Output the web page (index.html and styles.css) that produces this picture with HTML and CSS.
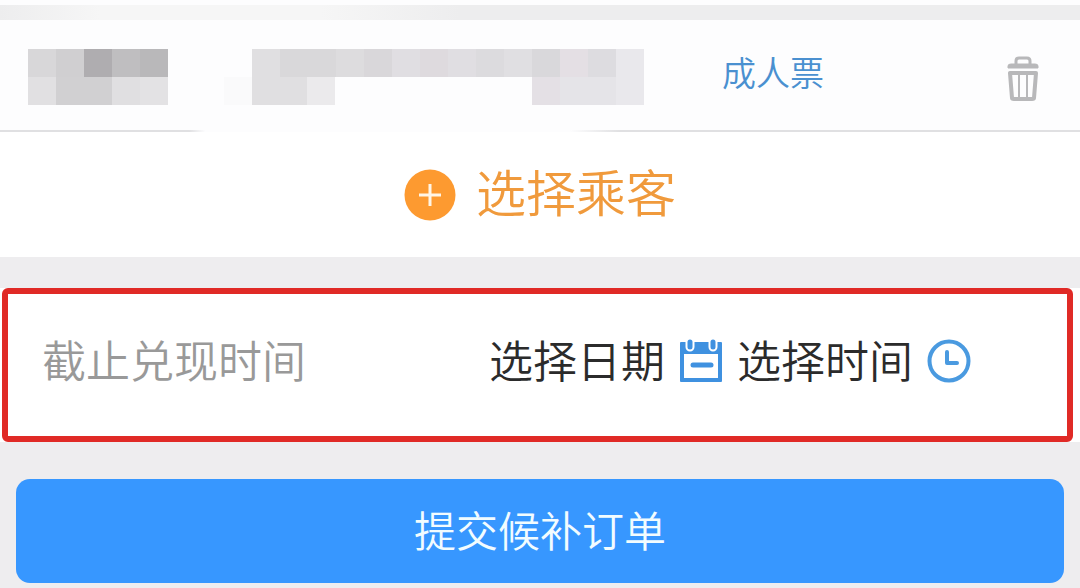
FILE: index.html
```
<!DOCTYPE html>
<html lang="zh-CN">
<head>
    <meta charset="UTF-8">
    <meta name="viewport" content="width=device-width, initial-scale=1.0">
    <title>提交候补订单</title>
    <link rel="stylesheet" href="styles.css">
</head>
<body>
    <div class="strip"></div>

    <div class="passenger">
        <!-- masked name and ID number -->
        <svg class="mask-name" width="140" height="56" viewBox="0 0 140 56" shape-rendering="crispEdges" aria-hidden="true">
            <rect width="28" height="28" fill="#d8d7d9"/>
            <rect x="28" width="28" height="28" fill="#d0cfd1"/>
            <rect x="56" width="28" height="28" fill="#afadb0"/>
            <rect x="84" width="28" height="28" fill="#bfbec0"/>
            <rect x="112" width="28" height="28" fill="#b9b8ba"/>
            <rect y="28" width="28" height="28" fill="#e1e0e2"/>
            <rect x="28" y="28" width="56" height="28" fill="#d1d0d2"/>
            <rect x="84" y="28" width="28" height="28" fill="#e0dfe1"/>
            <rect x="112" y="28" width="28" height="28" fill="#e3e2e4"/>
        </svg>
        <svg class="mask-id" width="420" height="56" viewBox="0 0 420 56" shape-rendering="crispEdges" aria-hidden="true">
            <rect y="28" width="28" height="28" fill="#fafafb"/>
            <rect x="28" width="28" height="28" fill="#e0dfe1"/>
            <rect x="56" width="56" height="28" fill="#d9d8da"/>
            <rect x="112" width="28" height="28" fill="#dddcde"/>
            <rect x="140" width="28" height="28" fill="#d9d7da"/>
            <rect x="168" width="28" height="28" fill="#e0dee2"/>
            <rect x="196" width="28" height="28" fill="#dedade"/>
            <rect x="224" width="28" height="28" fill="#e0dee2"/>
            <rect x="252" width="28" height="28" fill="#dcdbde"/>
            <rect x="280" width="28" height="28" fill="#e0dfe2"/>
            <rect x="308" width="28" height="28" fill="#d9d8db"/>
            <rect x="336" width="28" height="28" fill="#e4dfe4"/>
            <rect x="364" width="28" height="28" fill="#dddce0"/>
            <rect x="392" width="28" height="28" fill="#e9e8ec"/>
            <rect x="28" y="28" width="55" height="28" fill="#e0dfe1"/>
            <rect x="83" y="28" width="28" height="28" fill="#ebeaec"/>
            <rect x="308" y="28" width="28" height="28" fill="#e4e0e5"/>
            <rect x="336" y="28" width="56" height="28" fill="#e5e4e8"/>
            <rect x="392" y="28" width="28" height="28" fill="#e9e8ec"/>
        </svg>
        <span class="ticket-type">成人票</span>
        <button class="delete-btn" type="button" aria-label="删除">
            <svg width="34" height="46" viewBox="0 0 34 46" fill="none" stroke="#b8b8ba">
                <path d="M10 8V5Q10 2 13 2H21Q24 2 24 5V8" stroke-width="3"/>
                <path d="M2 12V10Q2 8 5 8H29Q32 8 32 10V12Z" fill="#b8b8ba" stroke-width="1"/>
                <path d="M4 17H30L28 42Q28 43 26 43H8Q6 43 6 42Z" stroke-width="4" stroke-linejoin="round"/>
                <path d="M13 18V42M21 18V42" stroke-width="2"/>
            </svg>
        </button>
    </div>

    <button class="add-passenger" type="button">
        <svg width="52" height="52" viewBox="0 0 52 52" aria-hidden="true">
            <circle cx="26" cy="26" r="25.5" fill="#fd9a30"/>
            <path d="M15 26H37M26 15V37" stroke="#fff5e6" stroke-width="3"/>
        </svg>
        <span class="add-text">选择乘客</span>
    </button>

    <div class="deadline">
        <div class="deadline-frame">
            <span class="deadline-label">截止兑现时间</span>
            <div class="pickers">
                <button class="picker" type="button">
                    <span class="picker-text">选择日期</span>
                    <svg width="44" height="44" viewBox="0 0 44 44" aria-hidden="true">
                        <path d="M2 3H42Q43 3 43 4V42Q43 43 42 43H2Q1 43 1 42V4Q1 3 2 3Z" fill="#3f91e0"/>
                        <path d="M5 15H39V39H5Z" fill="#fff"/>
                        <path d="M11 3V8M34 3V8" stroke="#fff" stroke-width="9" stroke-linecap="round"/>
                        <path d="M7 0H15V4H7ZM30 0H38V4H30Z" fill="#fff"/>
                        <path d="M11 3V8M34 3V8" stroke="#3f91e0" stroke-width="5" stroke-linecap="round"/>
                        <path d="M14 26H32" stroke="#3f91e0" stroke-width="5" stroke-linecap="round"/>
                    </svg>
                </button>
                <button class="picker" type="button">
                    <span class="picker-text">选择时间</span>
                    <svg width="44" height="44" viewBox="0 0 44 44" fill="none" stroke="#4a9ae0" aria-hidden="true">
                        <circle cx="22" cy="22" r="19.5" stroke-width="4"/>
                        <path d="M20 13V24H30" stroke-width="4" stroke-linecap="round" stroke-linejoin="round"/>
                    </svg>
                </button>
            </div>
        </div>
    </div>

    <div class="submit-area">
        <button class="submit-btn" type="submit">提交候补订单</button>
    </div>
</body>
</html>
```
FILE: styles.css
```
* {
    box-sizing: border-box;
}

body {
    margin: 0;
    background: #eeedef;
    font-family: "Noto Sans CJK SC", sans-serif;
    font-weight: 350;
    color: #2b2b2b;
}

button {
    margin: 0;
    padding: 0;
    border: none;
    background: none;
    font: inherit;
    color: inherit;
    cursor: pointer;
}

svg {
    display: block;
    flex: none;
}

.strip {
    height: 20px;
    border-top: 5px solid #fdfdfe;
    background: linear-gradient(to right, #ededee 0, #f6f6f6 100px, #f6f6f6 320px, #ededee 460px);
}

.passenger {
    display: flex;
    align-items: center;
    height: 112px;
    padding: 4px 40px 0 28px;
    background: #fdfdfe;
    border-bottom: 2px solid;
    border-image: linear-gradient(to right, #e0e0e2 190px, #fdfdfe 206px, #fdfdfe 570px, #e0e0e2 620px) 1;
}

.mask-id {
    margin-left: 56px;
}

.ticket-type {
    margin: 0 auto 0 78px;
    padding-bottom: 10px;
    font-size: 34px;
    line-height: 40px;
    color: #4a90d0;
}

.delete-btn {
    padding-top: 4px;
}

.add-passenger {
    display: flex;
    align-items: center;
    justify-content: center;
    gap: 20px;
    width: 100%;
    height: 125px;
    background: #fff;
    font-size: 50px;
    line-height: 60px;
    color: #f09a3c;
}

.add-text {
    padding-bottom: 10px;
}

.deadline {
    margin-top: 31px;
    padding: 0 7px 0 2px;
    background: #fff;
}

.deadline-frame {
    display: flex;
    align-items: center;
    justify-content: space-between;
    height: 154px;
    padding: 0 96px 8px 34px;
    border: 6px solid #e02a26;
    border-radius: 6px;
    font-size: 44px;
    line-height: 52px;
}

.deadline-label {
    padding-bottom: 4px;
    color: #999;
}

.pickers,
.picker {
    display: flex;
    align-items: center;
    gap: 14px;
}

.picker-text {
    padding-bottom: 4px;
}

.submit-area {
    padding: 37px 16px 5px;
}

.submit-btn {
    display: block;
    width: 100%;
    height: 104px;
    padding-bottom: 4px;
    border-radius: 14px;
    background: #3797ff;
    font-size: 42px;
    line-height: 50px;
    color: #f2fcff;
}
```
